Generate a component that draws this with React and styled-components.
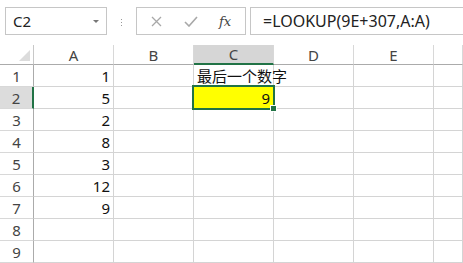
import React from "react";
import styled, { createGlobalStyle, css } from "styled-components";

const Global = createGlobalStyle`
  html, body { margin: 0; padding: 0; background: #fff; overflow: hidden; }
  body { font-family: "Noto Sans", "Noto Sans CJK SC", sans-serif; }
`;

const Page = styled.div`
  width: 463px;
  height: 263px;
  overflow: hidden;
  background: #fff;
`;

const Toolbar = styled.div`
  display: flex;
  align-items: center;
  height: 45px;
  padding: 7px 0 10px 5px;
  box-sizing: border-box;
`;

const NameBox = styled.div`
  width: 102px;
  height: 28px;
  box-sizing: border-box;
  border: 1px solid #c6c6c6;
  display: flex;
  align-items: center;
  justify-content: space-between;
  padding: 0 7px 0 7px;
  font-size: 15px;
  color: #222;
`;

const Caret = styled.span`
  width: 0;
  height: 0;
  border-left: 3px solid transparent;
  border-right: 3px solid transparent;
  border-top: 3px solid #777;
`;

const Grip = styled.div`
  width: 29px;
  display: flex;
  flex-direction: column;
  align-items: center;
  gap: 2px;
  span { width: 1px; height: 1px; background: #999; }
  span:nth-child(1) { margin-top: 2px; }
`;

const FxBox = styled.div`
  width: 110px;
  height: 28px;
  box-sizing: border-box;
  border: 1px solid #c6c6c6;
  display: flex;
  align-items: center;
  padding-left: 14px;
`;

const FxIcon = styled.span`
  display: inline-flex;
  width: 33px;
  justify-content: flex-start;
`;

const Fx = styled.span`
  font-family: "DejaVu Serif", "Liberation Serif", serif;
  font-style: italic;
  font-size: 13px;
  color: #444;
  margin-left: 2px;
`;

const Input = styled.div`
  flex: 1;
  height: 28px;
  box-sizing: border-box;
  margin-left: 4px;
  border: 1px solid #c6c6c6;
  border-right: none;
  display: flex;
  align-items: center;
  padding-left: 12px;
  font-size: 16px;
  color: #222;
  white-space: nowrap;
`;

const Grid = styled.div`
  display: grid;
  grid-template-columns: 34px repeat(5, 80px) 1fr;
  grid-template-rows: 20px repeat(9, 22px);
`;

const Corner = styled.div`
  border-right: 1px solid #c8c8c8;
  border-bottom: 1px solid #ababab;
  position: relative;
  &::after {
    content: "";
    position: absolute;
    right: 3px;
    bottom: 3px;
    width: 0;
    height: 0;
    border-left: 11px solid transparent;
    border-bottom: 11px solid #dcdcdc;
  }
`;

const ColHead = styled.div`
  display: flex;
  align-items: center;
  justify-content: center;
  font-size: 15px;
  color: #444;
  border-right: 1px solid #d8d8d8;
  border-bottom: 1px solid #ababab;
  box-sizing: border-box;
  ${(p) =>
    p.$active &&
    css`
      background: #d6d6d6;
      border-bottom: 2px solid #217346;
    `}
`;

const RowHead = styled.div`
  display: flex;
  align-items: center;
  justify-content: center;
  font-size: 15px;
  color: #444;
  border-right: 1px solid #ababab;
  border-bottom: 1px solid #d8d8d8;
  box-sizing: border-box;
  ${(p) =>
    p.$active &&
    css`
      background: #dcdcdc;
      border-right: 2px solid #217346;
    `}
`;

const Cell = styled.div`
  position: relative;
  display: flex;
  align-items: center;
  justify-content: ${(p) => (p.$num ? "flex-end" : "flex-start")};
  padding: 0 ${(p) => (p.$num ? "3px" : "0")} 0 ${(p) => (p.$num ? "0" : "3px")};
  font-size: 15px;
  color: #111;
  white-space: nowrap;
  border-right: 1px solid #d4d4d4;
  border-bottom: 1px solid #d4d4d4;
  box-sizing: border-box;
  background: ${(p) => p.$fill || "transparent"};
  z-index: ${(p) => (p.$overflow ? 2 : 1)};
`;

const Selection = styled.div`
  position: absolute;
  left: -2px;
  top: -2px;
  right: -2px;
  bottom: -2px;
  border: 2px solid #217346;
  pointer-events: none;
`;

const Handle = styled.div`
  position: absolute;
  right: -4px;
  bottom: -4px;
  width: 5px;
  height: 5px;
  background: #217346;
  border: 1px solid #fff;
`;

const Text = styled.span`
  position: relative;
  z-index: 3;
`;

const cols = ["A", "B", "C", "D", "E", ""];
const data = {
  1: { A: "1", C: "最后一个数字" },
  2: { A: "5", C: "9" },
  3: { A: "2" },
  4: { A: "8" },
  5: { A: "3" },
  6: { A: "12" },
  7: { A: "9" },
};

export default function App() {
  const rows = [1, 2, 3, 4, 5, 6, 7, 8, 9];
  return (
    <Page>
      <Global />
      <Toolbar>
        <NameBox>
          <span>C2</span>
          <Caret />
        </NameBox>
        <Grip>
          <span />
          <span />
          <span />
        </Grip>
        <FxBox>
          <FxIcon>
            <svg width="11" height="11" viewBox="0 0 11 11">
              <path d="M1 1 L10 10 M10 1 L1 10" stroke="#a8a8a8" strokeWidth="1.3" fill="none" />
            </svg>
          </FxIcon>
          <FxIcon>
            <svg width="14" height="11" viewBox="0 0 14 11">
              <path d="M1 6 L5 10 L13 1" stroke="#a8a8a8" strokeWidth="1.6" fill="none" />
            </svg>
          </FxIcon>
          <Fx>fx</Fx>
        </FxBox>
        <Input>=LOOKUP(9E+307,A:A)</Input>
      </Toolbar>
      <Grid>
        <Corner />
        {cols.map((c) => (
          <ColHead key={"h" + c} $active={c === "C"}>
            {c}
          </ColHead>
        ))}
        {rows.map((r) => (
          <React.Fragment key={r}>
            <RowHead $active={r === 2}>{r}</RowHead>
            {cols.map((c) => {
              const v = data[r] && data[r][c];
              const isSel = r === 2 && c === "C";
              const isText = v && isNaN(Number(v));
              return (
                <Cell
                  key={c}
                  $num={v && !isText}
                  $overflow={isText || isSel}
                  $fill={isSel ? "#ffff00" : undefined}
                >
                  {v && <Text>{v}</Text>}
                  {isSel && (
                    <Selection>
                      <Handle />
                    </Selection>
                  )}
                </Cell>
              );
            })}
          </React.Fragment>
        ))}
      </Grid>
    </Page>
  );
}
